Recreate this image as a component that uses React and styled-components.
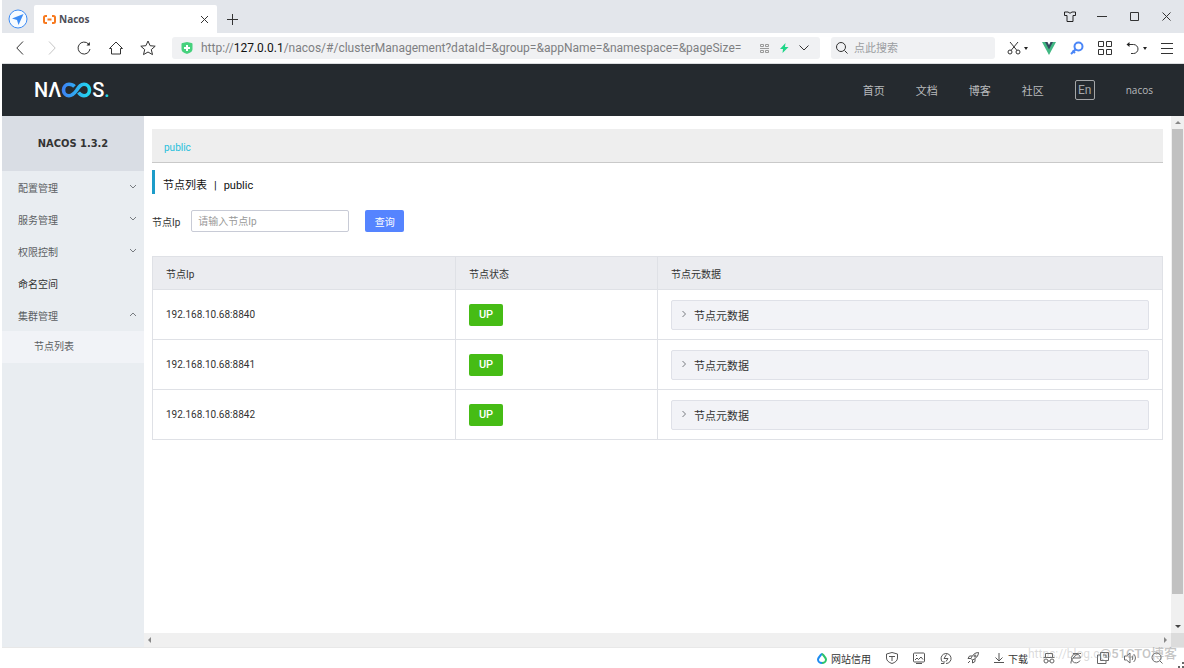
import React from "react";
import styled, { createGlobalStyle, css } from "styled-components";

const sans = `Roboto, "Noto Sans CJK SC", sans-serif`;
const humanist = `"Open Sans", "Noto Sans CJK SC", sans-serif`;
const compact = `"DejaVu Sans Condensed", "Noto Sans CJK SC", sans-serif`;

const GlobalStyle = createGlobalStyle`
  *, *::before, *::after { box-sizing: border-box; }
  body { margin: 0; background: #fff; font-family: ${sans}; font-size: 10px; color: #333; }
  button, input { font: inherit; color: inherit; }
  button { border: 0; padding: 0; background: none; display: inline-flex; align-items: center; justify-content: center; }
  a { color: inherit; text-decoration: none; }
  ul { list-style: none; margin: 0; padding: 0; }
`;

const Icon = styled.svg.attrs({ "aria-hidden": true })`
  display: block;
  flex: none;
  width: ${(p) => p.$w || 14}px;
  height: ${(p) => p.$h || p.$w || 14}px;
  fill: none;
  stroke: ${(p) => p.$color || "#333"};
  stroke-width: ${(p) => p.$weight || 1};
`;

const Window = styled.div`
  display: flex;
  flex-direction: column;
  min-height: 100vh;
  padding-left: 2px;
`;

/* ---- browser tab strip ---- */
const TabStrip = styled.div`
  display: flex;
  align-items: center;
  height: 33px;
  padding-right: 6px;
  background: #e3e6eb;
`;
const Avatar = styled.button`
  width: 32px;
  height: 33px;
  padding-top: 4px;
`;
const Tab = styled.div`
  display: flex;
  align-items: center;
  align-self: flex-end;
  width: 183px;
  height: 28px;
  padding: 0 8px 0 9px;
  background: #fff;
  border-radius: 2px 2px 0 0;
`;
const TabTitle = styled.span`
  flex: 1;
  margin-left: 3px;
  font-family: ${humanist};
  font-size: 10px;
  font-weight: 700;
  color: #4d4d57;
`;
const NewTab = styled.button`
  width: 30px;
  height: 33px;
  padding-top: 6px;
`;
const WindowButtons = styled.div`
  display: flex;
  gap: 8px;
  margin-left: auto;
`;
const WindowButton = styled.button`
  width: 24px;
  height: 33px;
`;

/* ---- browser toolbar ---- */
const Toolbar = styled.div`
  display: flex;
  align-items: center;
  height: 31px;
  padding: 0 11px 0 2px;
  border-bottom: 1px solid #dcdee0;
  background: #fff;
`;
const ToolButton = styled.button`
  width: 32px;
  height: 30px;
`;
const AddressBar = styled.div`
  display: flex;
  align-items: center;
  flex: 1;
  min-width: 0;
  height: 22px;
  margin-left: 8px;
  padding: 0 11px 0 9px;
  border-radius: 3px;
  background: #f0f1f3;
`;
const Address = styled.span`
  flex: 1;
  min-width: 0;
  margin-left: 8px;
  overflow: hidden;
  white-space: nowrap;
  font-size: 12px;
  line-height: 22px;
  color: #7e7f82;
  b { font-weight: 400; color: #111; }
`;
const AddressTools = styled.div`
  display: flex;
  align-items: center;
  gap: 8px;
`;
const SearchBox = styled.label`
  display: flex;
  align-items: center;
  gap: 6px;
  width: 164px;
  height: 22px;
  margin-left: 11px;
  padding: 0 5px;
  border-radius: 3px;
  background: #f0f1f3;
`;
const SearchInput = styled.input`
  width: 100%;
  min-width: 0;
  padding: 0;
  border: 0;
  outline: 0;
  background: transparent;
  font-size: 11px;
  &::placeholder { color: #9b9da1; opacity: 1; }
`;
const Extensions = styled.div`
  display: flex;
  align-items: center;
  gap: 14px;
  margin-left: 12px;
`;
const MenuTool = styled.button`
  gap: 3px;
`;

/* ---- site header ---- */
const SiteHeader = styled.header`
  display: flex;
  align-items: center;
  justify-content: space-between;
  height: 52px;
  padding: 0 31px 0 32px;
  background: #252a2f;
`;
const Logo = styled.a`
  display: flex;
  align-items: center;
  font-size: 20px;
  font-weight: 500;
  line-height: 24px;
  color: #fff;
`;
const LogoDot = styled.span`
  color: #22d3e6;
`;
const SiteNav = styled.nav`
  display: flex;
  align-items: center;
  gap: 31px;
  font-size: 11px;
  color: #b9bbbd;
`;
const LangButton = styled.button`
  width: 20px;
  height: 20px;
  border: 1px solid #a4a6a8;
  border-radius: 2px;
  font-size: 12px;
  line-height: 18px;
  color: #a4a6a8;
`;
const UserLink = styled.a`
  font-family: ${humanist};
  font-size: 10px;
`;

/* ---- console body ---- */
const Body = styled.div`
  display: flex;
  flex: 1;
`;
const Sidebar = styled.aside`
  flex: none;
  width: 142px;
  background: #e9edf1;
`;
const Version = styled.h1`
  margin: 0;
  font-family: ${compact};
  font-size: 11px;
  font-weight: 700;
  line-height: 55px;
  text-align: center;
  background: #d9dde4;
`;
const entry = css`
  display: flex;
  align-items: center;
  justify-content: space-between;
  width: 100%;
  height: 32px;
  padding: 0 7px 0 16px;
  color: ${(p) => (p.$strong ? "#333" : "#5c5f63")};
`;
const MenuButton = styled.button`${entry}`;
const MenuLink = styled.a`${entry}`;
const SubLink = styled.a`
  display: block;
  padding-left: 32px;
  line-height: 32px;
  color: #5c5f63;
  background: #f1f3f7;
`;

const Viewport = styled.div`
  display: grid;
  flex: 1;
  min-width: 0;
  grid-template-columns: minmax(0, 1fr) 13px;
  grid-template-rows: 1fr 14px;
`;
const Main = styled.main`
  padding: 13px 8px 0;
`;
const VScroll = styled.div`
  display: flex;
  flex-direction: column;
  align-items: center;
  justify-content: space-between;
  padding: 5px 0;
  background: #f0f0f0;
`;
const Thumb = styled.div`
  flex: 1;
  width: 11px;
  margin: 5px 0 31px;
  background: #c1c1c1;
`;
const HScroll = styled.div`
  display: flex;
  align-items: center;
  justify-content: space-between;
  padding: 0 4px;
  background: #f0f0f0;
`;
const ScrollCorner = styled.div`
  background: #dcdcdc;
`;

const Namespaces = styled.div`
  height: 34px;
  padding: 0 12px;
  border-bottom: 1px solid #c9c9c9;
  background: #eee;
  line-height: 38px;
`;
const NamespaceLink = styled.a`
  font-size: 10px;
  color: #24bfdc;
`;
const PageTitle = styled.h2`
  margin: 7px 0 16px;
  padding: 8px 0 0 8px;
  border-left: 3px solid #1c9cc9;
  font-size: 11px;
  font-weight: 400;
  line-height: 16px;
  color: #111;
  span { margin: 0 7px; }
`;
const Filter = styled.form`
  display: flex;
  align-items: center;
  height: 22px;
  margin-bottom: 24px;
`;
const FilterInput = styled.input`
  width: 158px;
  height: 22px;
  margin: 0 16px 0 11px;
  padding: 0 6px;
  border: 1px solid #c8cbd6;
  border-radius: 2px;
  background: #fff;
  &::placeholder { color: #999; opacity: 1; }
`;
const QueryButton = styled.button`
  width: 39px;
  height: 22px;
  border-radius: 2px;
  background: #5584ff;
  color: #fff;
`;

const NodeTable = styled.table`
  width: 100%;
  table-layout: fixed;
  border-collapse: collapse;
  th, td { padding: 0 13px; border: 1px solid #dfe1e6; text-align: left; }
  th { height: 33px; font-weight: 400; background: #ebecf0; }
  td { height: 50px; }
`;
const StateTag = styled.span`
  display: inline-block;
  vertical-align: middle;
  width: 34px;
  border-radius: 2px;
  background: #46bc15;
  color: #fff;
  font-size: 11px;
  font-weight: 500;
  line-height: 22px;
  text-align: center;
`;
const MetaToggle = styled.button`
  width: 100%;
  height: 30px;
  padding: 0 8px;
  gap: 6px;
  justify-content: flex-start;
  border: 1px solid #dfe1e8;
  border-radius: 2px;
  background: #f2f3f7;
  font-size: 11px;
`;

/* ---- browser status bar ---- */
const StatusBar = styled.footer`
  position: relative;
  display: flex;
  align-items: center;
  justify-content: flex-end;
  gap: 15px;
  height: 21px;
  padding-right: 21px;
  border-top: 1px solid #e8e8e8;
  background: #fff;
`;
const StatusButton = styled.button`
  gap: 4px;
  height: 20px;
  color: #333;
`;
const Watermark = styled.span`
  position: absolute;
  right: 7px;
  bottom: 4px;
  display: flex;
  font-size: 13px;
  font-weight: 500;
  line-height: 20px;
  color: rgba(140, 140, 140, 0.5);
  pointer-events: none;
`;
const WatermarkUrl = styled.span`
  font-size: 12px;
  font-weight: 400;
  color: rgba(150, 150, 150, 0.35);
`;
const Grip = styled.span`
  position: absolute;
  right: 0;
  bottom: 0;
`;

const Caret = ({ d = "M0 0h4l-2 3z", w = 4, h = 3, color = "#222" }) => (
  <Icon $w={w} $h={h} viewBox={`0 0 ${w} ${h}`} $color="none">
    <path d={d} fill={color} />
  </Icon>
);

const Chevron = ({ dir }) => {
  const d = { down: "M1 2l3 3 3-3", up: "M1 5l3-3 3 3", right: "M2.5 0l3 3-3 3" }[dir];
  return (
    <Icon $w={8} viewBox="0 0 8 8" $color="#777b80">
      <path d={d} />
    </Icon>
  );
};

const menu = [
  { label: "配置管理", dir: "down" },
  { label: "服务管理", dir: "down" },
  { label: "权限控制", dir: "down" },
  { label: "命名空间", link: true },
  { label: "集群管理", dir: "up", children: ["节点列表"] },
];
const nodes = ["192.168.10.68:8840", "192.168.10.68:8841", "192.168.10.68:8842"];

const statusIcons = {
  安全: <path d="M6 .5l5.500 1.500v4c0 2.800-2.500 4.500-5.500 5.500C3 10.500.5 8.800.5 6V2zM3 4.500h6M6 4.500v4.500" />,
  图片: <><rect x=".5" y="1" width="11" height="9" rx="1" /><path d="M2 8l2-2 1.500 1.500L8 5l2 2.500M3 11.500h6M3 3.500h1" /></>,
  加速: <><path d="M2.500 10A5 5 0 1 1 6 11.500M1 11.500h3V9" /><path d="M6.500 2.500L4 6.500h4L6 9.500" /></>,
  火箭: <><path d="M11.500.5C8 .5 5.500 3 4 6.500L5.500 8C9 6.500 11.500 4 11.500.5zM5 4H2.500L1 6.500h3M8 7v2.500L5.500 11V8M1 11l2-2" /><circle cx="8" cy="4" r="1" /></>,
};
const moreIcons = {
  无痕: <><path d="M2.500 5V1.500h7V5M.5 5.500h11" /><circle cx="3" cy="9" r="2" /><circle cx="9" cy="9" r="2" /><path d="M5 9h2" /></>,
  兼容: <><path d="M10 8.500A4.500 4.500 0 1 1 10.500 6H3" /><path d="M1 11.500C0 8 7 .5 11 1.500M3 1.500h5" /></>,
  窗口: <path d="M3.500.5h8v8h-8zM3 3H.5v8.500H9V9M6 3h3v3" />,
  声音: <path d="M.5 4h2L6 1v10L2.500 8h-2zM8 4c1 1 1 3 0 4M9.500 2c2.500 2 2.500 6 0 8" />,
  缩放: <><circle cx="5.500" cy="5.500" r="4.500" /><path d="M9 9l2.500 2.500" /></>,
};

function BrowserTabs() {
  return (
    <TabStrip>
      <Avatar aria-label="账户">
        <Icon $w={20} viewBox="0 0 20 20" $color="#3e8df5">
          <circle cx="10" cy="10" r="9" fill="#f7fbff" />
          <path d="M15.500 5L4 9.500l5 1.500 1.500 5z" fill="#3e8df5" stroke="none" />
        </Icon>
      </Avatar>
      <Tab>
        <Icon $w={13} $h={9} viewBox="0 0 13 9" $color="#f7791e" $weight={2}>
          <path d="M4 1H2.500Q1 1 1 2.500v4Q1 8 2.500 8H4M9 1h1.500Q12 1 12 2.500v4Q12 8 10.500 8H9M4.500 4.500h4" />
        </Icon>
        <TabTitle>Nacos</TabTitle>
        <button aria-label="关闭标签页">
          <Icon $w={9} viewBox="0 0 9 9"><path d="M1 1l7 7M8 1L1 8" /></Icon>
        </button>
      </Tab>
      <NewTab aria-label="新建标签页">
        <Icon $w={11} viewBox="0 0 11 11"><path d="M5.500 0v11M0 5.500h11" /></Icon>
      </NewTab>
      <WindowButtons>
        <WindowButton aria-label="皮肤">
          <Icon $w={12} $h={11} viewBox="0 0 12 11" $color="#222">
            <path d="M4 1H.5v3.500H3v6h6v-6h2.500V1H8Q6 3.500 4 1z" />
          </Icon>
        </WindowButton>
        <WindowButton aria-label="最小化">
          <Icon $w={10} viewBox="0 0 10 10"><path d="M0 4.500h10" /></Icon>
        </WindowButton>
        <WindowButton aria-label="最大化">
          <Icon $w={9} viewBox="0 0 9 9"><path d="M.5.5h8v8h-8z" /></Icon>
        </WindowButton>
        <WindowButton aria-label="关闭">
          <Icon $w={9} viewBox="0 0 9 9"><path d="M.5.5l8 8M8.500.5l-8 8" /></Icon>
        </WindowButton>
      </WindowButtons>
    </TabStrip>
  );
}

function BrowserToolbar() {
  return (
    <Toolbar>
      <ToolButton aria-label="后退">
        <Icon $w={8} $h={14} viewBox="0 0 8 14"><path d="M7 .5L.8 7 7 13.500" /></Icon>
      </ToolButton>
      <ToolButton aria-label="前进">
        <Icon $w={8} $h={14} viewBox="0 0 8 14" $color="#c4c4c4"><path d="M1 .5L7.200 7 1 13.500" /></Icon>
      </ToolButton>
      <ToolButton aria-label="刷新">
        <Icon viewBox="0 0 14 14"><path d="M13 8A6 6 0 1 1 11.500 3" /><path d="M12.800 1v3.500H9.500z" fill="#222" stroke="none" /></Icon>
      </ToolButton>
      <ToolButton aria-label="主页">
        <Icon viewBox="0 0 14 14"><path d="M.5 7.500L7 1l6.500 6.500H11.500v5.500h-9V7.500z" /></Icon>
      </ToolButton>
      <ToolButton aria-label="收藏">
        <Icon $w={16} viewBox="0 0 16 16"><path d="M8 1l2.100 4.700 5.100.5-3.900 3.400 1.200 5L8 12l-4.500 2.600 1.200-5L.8 6.200l5.100-.5z" /></Icon>
      </ToolButton>
      <AddressBar>
        <Icon $w={12} viewBox="0 0 12 12" $color="none">
          <path d="M1.500 1L6 0l4.500 1Q11.500 1 11.500 2v5c0 3-3 4-5.500 5C3.500 11 .5 10 .5 7V2Q.5 1 1.500 1z" fill="#46d17d" />
          <path d="M5 3h2v2h2v2H7v2H5V7H3V5h2z" fill="#fff" />
        </Icon>
        <Address>
          http://<b>127.0.0.1</b>/nacos/#/clusterManagement?dataId=&amp;group=&amp;appName=&amp;namespace=&amp;pageSize=
        </Address>
        <AddressTools>
          <button aria-label="二维码">
            <Icon $w={9} viewBox="0 0 9 9" $color="#999"><path d="M.5.5h3v2h-3zM5.500.5h3v2h-3zM.5 6.500h3v2h-3zM5.500 6.500h3v2h-3zM0 4.500h9" /></Icon>
          </button>
          <button aria-label="极速模式">
            <Icon $w={14} $h={10} viewBox="0 0 14 10" $color="none"><path d="M8.500 0L3 6h3L5.500 10 11.500 4h-3.500z" fill="#1fd688" /></Icon>
          </button>
          <button aria-label="展开">
            <Icon $w={10} $h={6} viewBox="0 0 10 6"><path d="M.5.5L5 5 9.500.5" /></Icon>
          </button>
        </AddressTools>
      </AddressBar>
      <SearchBox>
        <Icon $w={12} viewBox="0 0 12 12"><circle cx="5" cy="5" r="4.500" /><path d="M8.500 8.500l3 3" /></Icon>
        <SearchInput aria-label="搜索" placeholder="点此搜索" />
      </SearchBox>
      <Extensions>
        <MenuTool aria-label="截图">
          <Icon viewBox="0 0 14 14"><circle cx="3" cy="11" r="2" /><circle cx="11" cy="11" r="2" /><path d="M3 1l7 8.500M11 1L4 9.500" /></Icon>
          <Caret />
        </MenuTool>
        <button aria-label="Vue">
          <Icon $w={14} $h={13} viewBox="0 0 14 13" $color="none">
            <path d="M0 0h14L7 13z" fill="#41b883" /><path d="M3 0h8L7 7.500z" fill="#35495e" /><path d="M5.500 0h3L7 3z" fill="#fff" />
          </Icon>
        </button>
        <button aria-label="查找">
          <Icon viewBox="0 0 14 14" $color="#4a86f7" $weight={2}>
            <circle cx="8.500" cy="5.500" r="4" /><path d="M5.500 8.500L1 13M2.500 9.500l2.500 2.500" />
          </Icon>
        </button>
        <button aria-label="应用">
          <Icon viewBox="0 0 14 14"><path d="M.5.5h5v5h-5zM8.500.5h5v5h-5zM.5 8.500h5v5h-5zM8.500 8.500h5v5h-5z" /></Icon>
        </button>
        <MenuTool aria-label="恢复">
          <Icon viewBox="0 0 14 14"><path d="M1 3.500h6.500a4.500 4.500 0 0 1 0 9H5" /><path d="M3.500 1v5L.5 3.500z" fill="#222" stroke="none" /></Icon>
          <Caret />
        </MenuTool>
        <button aria-label="菜单">
          <Icon $w={12} $h={11} viewBox="0 0 12 11"><path d="M0 .5h12M0 5.500h12M0 10.500h12" /></Icon>
        </button>
      </Extensions>
    </Toolbar>
  );
}

function NodeList() {
  return (
    <Main>
      <Namespaces><NamespaceLink href="#public">public</NamespaceLink></Namespaces>
      <PageTitle>节点列表<span>|</span>public</PageTitle>
      <Filter onSubmit={(e) => e.preventDefault()}>
        <label htmlFor="node-ip">节点Ip</label>
        <FilterInput id="node-ip" placeholder="请输入节点Ip" />
        <QueryButton type="submit">查询</QueryButton>
      </Filter>
      <NodeTable>
        <colgroup>
          <col width="30%" /><col width="20%" /><col width="50%" />
        </colgroup>
        <thead>
          <tr><th>节点Ip</th><th>节点状态</th><th>节点元数据</th></tr>
        </thead>
        <tbody>
          {nodes.map((ip) => (
            <tr key={ip}>
              <td>{ip}</td>
              <td><StateTag>UP</StateTag></td>
              <td><MetaToggle aria-expanded="false"><Chevron dir="right" />节点元数据</MetaToggle></td>
            </tr>
          ))}
        </tbody>
      </NodeTable>
    </Main>
  );
}

export default function App() {
  return (
    <Window>
      <GlobalStyle />
      <BrowserTabs />
      <BrowserToolbar />
      <SiteHeader>
        <Logo href="#home" aria-label="Nacos">
          NΛ
          <Icon $w={31} $h={16} viewBox="0 0 31 16" $weight={3.6}>
            <defs>
              <linearGradient id="loop" gradientUnits="userSpaceOnUse" x1="0" y1="0" x2="31" y2="0">
                <stop offset="0" stopColor="#3f7df6" /><stop offset="1" stopColor="#1fe0ee" />
              </linearGradient>
            </defs>
            <path
              stroke="url(#loop)"
              d="M13.500 4.500C12 2.800 10.500 2.300 8 2.300a5.500 5.700 0 0 0 0 11.400c3 0 4.500-1.200 7.500-5.200 3-4.500 4.500-6.200 7.500-6.200a5.500 5.700 0 0 1 0 11.400c-2.500 0-4-1.200-5.500-3.200"
            />
          </Icon>
          S<LogoDot>.</LogoDot>
        </Logo>
        <SiteNav>
          <a href="#home">首页</a>
          <a href="#docs">文档</a>
          <a href="#blog">博客</a>
          <a href="#community">社区</a>
          <LangButton>En</LangButton>
          <UserLink href="#user">nacos</UserLink>
        </SiteNav>
      </SiteHeader>
      <Body>
        <Sidebar>
          <Version>NACOS 1.3.2</Version>
          <nav>
            <ul>
              {menu.map((m) => (
                <li key={m.label}>
                  {m.link ? (
                    <MenuLink href="#namespace" $strong>{m.label}</MenuLink>
                  ) : (
                    <MenuButton aria-expanded={m.dir === "up"}>{m.label}<Chevron dir={m.dir} /></MenuButton>
                  )}
                  {m.children && (
                    <ul>{m.children.map((c) => <li key={c}><SubLink href="#nodes">{c}</SubLink></li>)}</ul>
                  )}
                </li>
              ))}
            </ul>
          </nav>
        </Sidebar>
        <Viewport>
          <NodeList />
          <VScroll>
            <Caret d="M0 3h6l-3-3z" w={6} color="#888" />
            <Thumb />
            <Caret d="M0 0h6l-3 3z" w={6} color="#444" />
          </VScroll>
          <HScroll>
            <Caret d="M3 0v6l-3-3z" w={3} h={6} color="#888" />
            <Caret d="M0 0v6l3-3z" w={3} h={6} color="#888" />
          </HScroll>
          <ScrollCorner />
        </Viewport>
      </Body>
      <StatusBar>
        <StatusButton>
          <Icon $w={10} $h={12} viewBox="0 0 10 12" $weight={2} $color="#1e8cf0">
            <path d="M5 1.500C3 4 1 6 1 7.500a4 3.500 0 0 0 4 3.500" />
            <path d="M5 1.500C7 4 9 6 9 7.500A4 3.500 0 0 1 5 11" stroke="#2cc46b" />
          </Icon>
          网站信用
        </StatusButton>
        {Object.entries(statusIcons).map(([name, shape]) => (
          <StatusButton key={name} aria-label={name}>
            <Icon $w={12} viewBox="0 0 12 12" $color="#555">{shape}</Icon>
          </StatusButton>
        ))}
        <StatusButton>
          <Icon $w={10} viewBox="0 0 10 10" $color="#555"><path d="M5 0v7.500M1.500 4.500L5 8l3.500-3.500M0 9.500h10" /></Icon>
          下载
        </StatusButton>
        {Object.entries(moreIcons).map(([name, shape]) => (
          <StatusButton key={name} aria-label={name}>
            <Icon $w={12} viewBox="0 0 12 12" $color="#666">{shape}</Icon>
          </StatusButton>
        ))}
        <Watermark><WatermarkUrl>https://blog.c</WatermarkUrl>@51CTO博客</Watermark>
        <Grip>
          <Icon $w={6} viewBox="0 0 6 6" $color="none">
            <path d="M4 0h2v2H4zM4 4h2v2H4zM0 4h2v2H0z" fill="#666" />
          </Icon>
        </Grip>
      </StatusBar>
    </Window>
  );
}
